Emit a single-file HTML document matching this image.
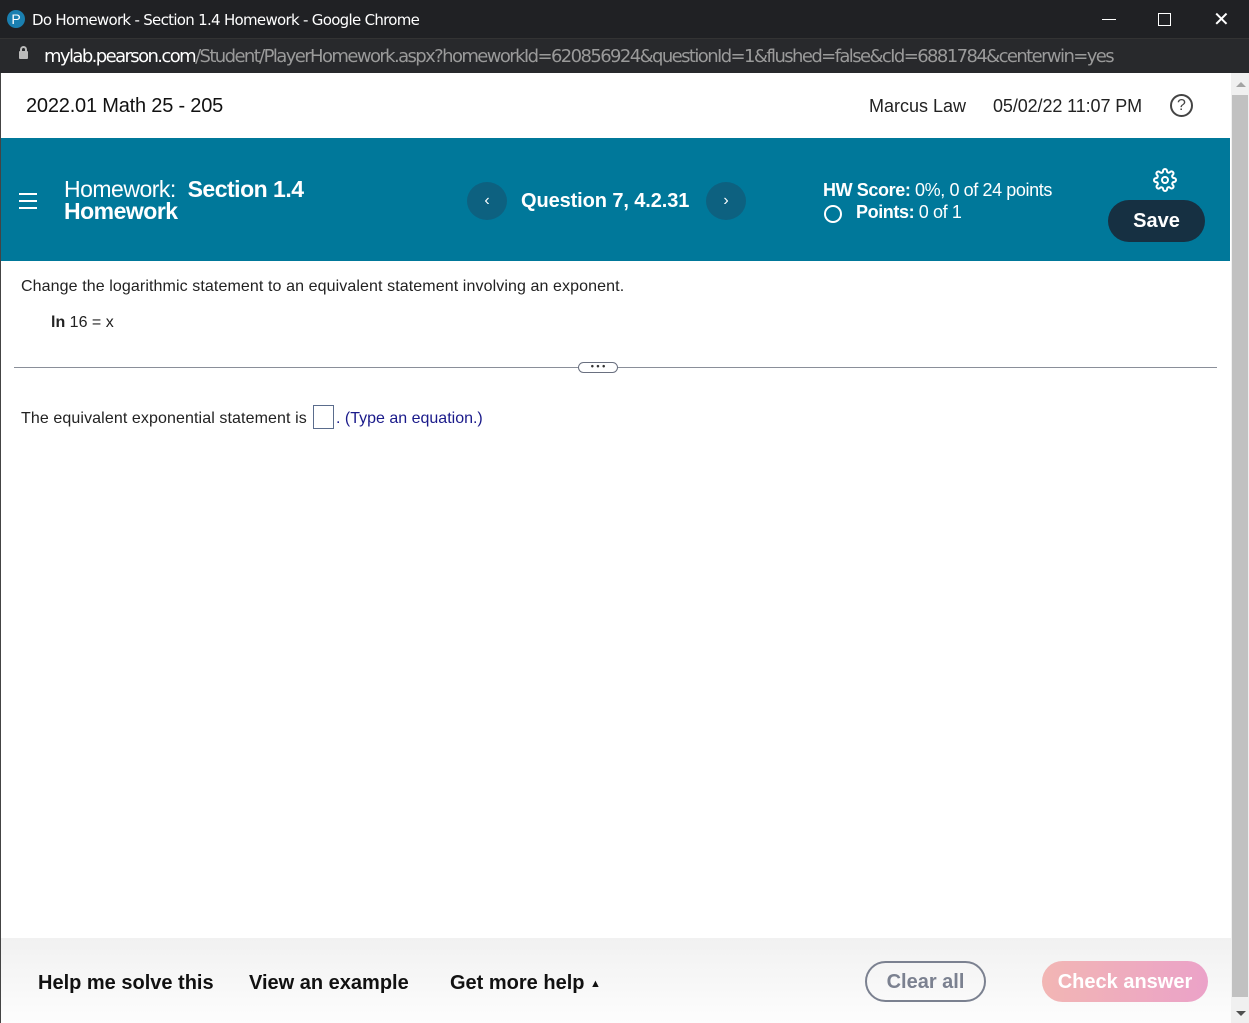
<!DOCTYPE html>
<html><head><style>
*{margin:0;padding:0;box-sizing:border-box}
body{width:1249px;height:1023px;overflow:hidden;position:relative;font-family:"Liberation Sans",Arial,sans-serif;background:#fff}
.abs{position:absolute}
</style></head><body>
<div class="abs" style="left:0;top:0;width:1249px;height:38px;background:#202124"></div>
<div class="abs" style="left:7px;top:10px;width:18px;height:18px;border-radius:50%;background:#1a7fb0;color:#fff;font-size:14px;text-align:center;line-height:18px">P</div>
<div class="abs" style="left:32px;top:11px;color:#fff;font-size:15px;font-family:'DejaVu Sans',sans-serif;letter-spacing:-0.7px">Do Homework - Section 1.4 Homework - Google Chrome</div>
<div class="abs" style="left:1102px;top:19px;width:14px;height:1px;background:#fff"></div>
<div class="abs" style="left:1158px;top:13px;width:13px;height:13px;border:1px solid #fff"></div>
<div class="abs" style="left:1213px;top:10px;color:#fff;font-size:20px;font-family:'DejaVu Sans';line-height:18px">✕</div>
<div class="abs" style="left:0;top:38px;width:1249px;height:35px;background:#28292c;border-top:1px solid #333"></div>
<div class="abs" style="left:19px;top:51px;width:9px;height:8px;background:#bbb;border-radius:1px"></div>
<div class="abs" style="left:20px;top:46px;width:7px;height:7px;border:2px solid #bbb;border-bottom:none;border-radius:4px 4px 0 0"></div>
<div class="abs" style="left:44px;top:46px;font-size:18px;color:#ddd;font-family:'DejaVu Sans',sans-serif;letter-spacing:-1.6px;white-space:nowrap"><span style="color:#fff">mylab.pearson.com</span><span style="color:#9a9a9a">/Student/PlayerHomework.aspx?homeworkId=620856924&amp;questionId=1&amp;flushed=false&amp;cId=6881784&amp;centerwin=yes</span></div>
<div class="abs" style="left:0;top:73px;width:1px;height:950px;background:#444"></div>
<div class="abs" style="left:1231px;top:73px;width:18px;height:950px;background:#f0f0f0"></div>
<div class="abs" style="left:1232px;top:95px;width:16px;height:902px;background:#c1c1c1"></div>
<div class="abs" style="left:1236px;top:82px;border:5px solid transparent;border-bottom:5px solid #a3a3a3;border-top:none"></div>
<div class="abs" style="left:1236px;top:1011px;border:5px solid transparent;border-top:5px solid #505050;border-bottom:none"></div>
<div class="abs" style="left:26px;top:95px;font-size:20px;color:#111;letter-spacing:-0.2px">2022.01 Math 25 - 205</div>
<div class="abs" style="left:869px;top:96px;font-size:18px;color:#222">Marcus Law</div>
<div class="abs" style="left:993px;top:96px;font-size:18px;color:#222;letter-spacing:-0.1px">05/02/22 11:07 PM</div>
<div class="abs" style="left:1170px;top:94px;width:23px;height:23px;border:2px solid #444;border-radius:50%;text-align:center;font-size:16px;line-height:19px;color:#444">?</div>
<div class="abs" style="left:1px;top:138px;width:1229px;height:123px;background:#00789a"></div>
<div class="abs" style="left:19px;top:193px;width:18px;height:2px;background:#fff;box-shadow:0 7px #fff,0 14px #fff"></div>
<div class="abs" style="left:64px;top:178px;font-size:23px;color:#fff;line-height:22px;letter-spacing:-0.5px">Homework:&nbsp; <b>Section 1.4</b><br><b>Homework</b></div>
<div class="abs" style="left:467px;top:182px;width:40px;height:38px;border-radius:50%;background:#0d6180;color:#fff;text-align:center;line-height:38px;font-size:16px">‹</div>
<div class="abs" style="left:521px;top:190px;font-size:20px;color:#fff;font-weight:bold;letter-spacing:-0.1px">Question 7, 4.2.31</div>
<div class="abs" style="left:706px;top:182px;width:40px;height:38px;border-radius:50%;background:#0d6180;color:#fff;text-align:center;line-height:38px;font-size:16px">›</div>
<div class="abs" style="left:823px;top:179px;font-size:18px;color:#fff;line-height:23px;letter-spacing:-0.4px"><b>HW Score:</b> 0%, 0 of 24 points</div>
<div class="abs" style="left:824px;top:205px;width:18px;height:18px;border:2px solid #fff;border-radius:50%"></div>
<div class="abs" style="left:856px;top:202px;font-size:18px;color:#fff;letter-spacing:-0.4px"><b>Points:</b> 0 of 1</div>
<svg class="abs" style="left:1153px;top:168px" width="24" height="24" viewBox="0 0 24 24" fill="none" stroke="#fff" stroke-width="2"><circle cx="12" cy="12" r="3"/><path d="M19.4 15a1.7 1.7 0 0 0 .3 1.8l.1.1a2 2 0 1 1-2.8 2.8l-.1-.1a1.7 1.7 0 0 0-1.8-.3 1.7 1.7 0 0 0-1 1.5V21a2 2 0 1 1-4 0v-.1a1.7 1.7 0 0 0-1.1-1.5 1.7 1.7 0 0 0-1.8.3l-.1.1a2 2 0 1 1-2.8-2.8l.1-.1a1.7 1.7 0 0 0 .3-1.8 1.7 1.7 0 0 0-1.5-1H3a2 2 0 1 1 0-4h.1a1.7 1.7 0 0 0 1.5-1.1 1.7 1.7 0 0 0-.3-1.8l-.1-.1a2 2 0 1 1 2.8-2.8l.1.1a1.7 1.7 0 0 0 1.8.3H9a1.7 1.7 0 0 0 1-1.5V3a2 2 0 1 1 4 0v.1a1.7 1.7 0 0 0 1 1.5 1.7 1.7 0 0 0 1.8-.3l.1-.1a2 2 0 1 1 2.8 2.8l-.1.1a1.7 1.7 0 0 0-.3 1.8V9a1.7 1.7 0 0 0 1.5 1H21a2 2 0 1 1 0 4h-.1a1.7 1.7 0 0 0-1.5 1z"/></svg>
<div class="abs" style="left:1108px;top:200px;width:97px;height:42px;border-radius:21px;background:#163042;color:#fff;font-weight:bold;font-size:20px;text-align:center;line-height:43px">Save</div>
<div class="abs" style="left:21px;top:278px;font-size:16px;color:#222;letter-spacing:0.1px">Change the logarithmic statement to an equivalent statement involving an exponent.</div>
<div class="abs" style="left:51px;top:314px;font-size:16px;color:#222"><b>ln</b> 16 = x</div>
<div class="abs" style="left:14px;top:367px;width:1203px;height:1px;background:#8a8f99"></div>
<div class="abs" style="left:578px;top:362px;width:40px;height:11px;border:1px solid #6a7080;border-radius:6px;background:#fff;font-size:9px;line-height:6px;text-align:center;color:#333;font-weight:bold">• • •</div>
<div class="abs" style="left:21px;top:410px;font-size:16px;color:#222;letter-spacing:0.1px">The equivalent exponential statement is</div>
<div class="abs" style="left:313px;top:405px;width:21px;height:24px;border:1px solid #5a6c8c"></div>
<div class="abs" style="left:336px;top:410px;font-size:16px;color:#1a1a8a">. (Type an equation.)</div>
<div class="abs" style="left:1px;top:938px;width:1230px;height:85px;background:linear-gradient(#f1f1f1,#fdfdfd)"></div>
<div class="abs" style="left:38px;top:972px;font-size:20px;font-weight:bold;color:#111">Help me solve this</div>
<div class="abs" style="left:249px;top:972px;font-size:20px;font-weight:bold;color:#111">View an example</div>
<div class="abs" style="left:450px;top:972px;font-size:20px;font-weight:bold;color:#111">Get more help <span style="font-size:11px;vertical-align:2px">▲</span></div>
<div class="abs" style="left:865px;top:961px;width:121px;height:41px;border:2px solid #7b8190;border-radius:21px;color:#7b8190;font-weight:bold;font-size:20px;text-align:center;line-height:38px">Clear all</div>
<div class="abs" style="left:1042px;top:961px;width:166px;height:41px;border-radius:21px;background:linear-gradient(90deg,#f2b6b4,#eba2c8);color:#fff;font-weight:bold;font-size:20px;text-align:center;line-height:42px">Check answer</div>
</body></html>
